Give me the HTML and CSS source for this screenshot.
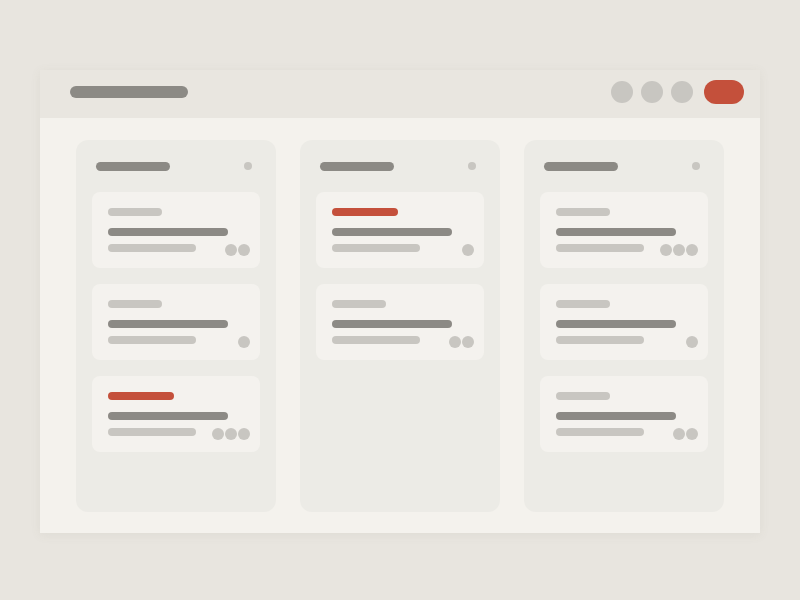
FILE: index.html
```html
<!DOCTYPE html>
<html>
<head>
<meta charset="utf-8">
<link rel="stylesheet" href="styles.css">
</head>
<body>
<div class="window">
  <div class="topbar">
    <div class="title"></div>
    <div class="actions">
      <span class="icon"></span><span class="icon"></span><span class="icon"></span>
      <span class="btn"></span>
    </div>
  </div>
  <div class="board">
    <div class="column">
      <div class="col-head"><span class="col-title"></span><span class="col-dot"></span></div>
      <div class="card">
        <div class="label"></div>
        <div class="line"></div>
        <div class="row"><div class="sub"></div><div class="avatars"><span></span><span></span></div></div>
      </div>
      <div class="card">
        <div class="label"></div>
        <div class="line"></div>
        <div class="row"><div class="sub"></div><div class="avatars"><span></span></div></div>
      </div>
      <div class="card">
        <div class="label red"></div>
        <div class="line"></div>
        <div class="row"><div class="sub"></div><div class="avatars"><span></span><span></span><span></span></div></div>
      </div>
    </div>
    <div class="column">
      <div class="col-head"><span class="col-title"></span><span class="col-dot"></span></div>
      <div class="card">
        <div class="label red"></div>
        <div class="line"></div>
        <div class="row"><div class="sub"></div><div class="avatars"><span></span></div></div>
      </div>
      <div class="card">
        <div class="label"></div>
        <div class="line"></div>
        <div class="row"><div class="sub"></div><div class="avatars"><span></span><span></span></div></div>
      </div>
    </div>
    <div class="column">
      <div class="col-head"><span class="col-title"></span><span class="col-dot"></span></div>
      <div class="card">
        <div class="label"></div>
        <div class="line"></div>
        <div class="row"><div class="sub"></div><div class="avatars"><span></span><span></span><span></span></div></div>
      </div>
      <div class="card">
        <div class="label"></div>
        <div class="line"></div>
        <div class="row"><div class="sub"></div><div class="avatars"><span></span></div></div>
      </div>
      <div class="card">
        <div class="label"></div>
        <div class="line"></div>
        <div class="row"><div class="sub"></div><div class="avatars"><span></span><span></span></div></div>
      </div>
    </div>
  </div>
</div>
</body>
</html>
```
FILE: styles.css
```css
html, body {
  margin: 0;
  padding: 0;
  background: #e8e5df;
  font-family: "Liberation Sans", Arial, sans-serif;
}
body {
  width: 800px;
  height: 600px;
  overflow: hidden;
}
.window {
  margin: 70px 40px 0 40px;
  width: 720px;
  height: 463px;
  display: flex;
  flex-direction: column;
  background: #f4f2ed;
  box-shadow: 0 2px 10px rgba(120, 110, 95, 0.08);
}
.topbar {
  height: 48px;
  flex: none;
  box-sizing: border-box;
  background: #e9e6e0;
  display: flex;
  align-items: center;
  justify-content: space-between;
  padding: 0 16px 4px 30px;
}
.title {
  width: 118px;
  height: 12px;
  border-radius: 6px;
  background: #8c8a85;
}
.actions {
  display: flex;
  align-items: center;
  gap: 8px;
}
.icon {
  width: 22px;
  height: 22px;
  border-radius: 50%;
  background: #c8c6c1;
}
.btn {
  width: 40px;
  height: 24px;
  border-radius: 12px;
  background: #c4503b;
  margin-left: 3px;
}
.board {
  flex: 1;
  display: flex;
  gap: 24px;
  padding: 22px 36px 21px 36px;
}
.column {
  width: 200px;
  box-sizing: border-box;
  background: #ecebe6;
  border-radius: 12px;
  padding: 20px 16px;
  display: flex;
  flex-direction: column;
  gap: 16px;
}
.col-head {
  height: 12px;
  display: flex;
  align-items: center;
  justify-content: space-between;
  padding: 0 8px 0 4px;
  margin-bottom: 4px;
}
.col-title {
  width: 74px;
  height: 9px;
  border-radius: 5px;
  background: #8c8a85;
}
.col-dot {
  width: 8px;
  height: 8px;
  border-radius: 50%;
  background: #c8c6c1;
}
.card {
  background: #f4f2ee;
  border-radius: 8px;
  padding: 16px 10px 12px 16px;
  display: flex;
  flex-direction: column;
}
.label {
  width: 54px;
  height: 8px;
  border-radius: 4px;
  background: #c8c6c1;
}
.label.red {
  width: 66px;
  background: #c4503b;
}
.line {
  width: 120px;
  height: 8px;
  border-radius: 4px;
  background: #8c8a85;
  margin-top: 12px;
}
.row {
  margin-top: 8px;
  display: flex;
  justify-content: space-between;
  align-items: flex-start;
}
.sub {
  width: 88px;
  height: 8px;
  border-radius: 4px;
  background: #c8c6c1;
}
.avatars {
  display: flex;
  gap: 1px;
}
.avatars span {
  width: 12px;
  height: 12px;
  border-radius: 50%;
  background: #c8c6c1;
}
```
